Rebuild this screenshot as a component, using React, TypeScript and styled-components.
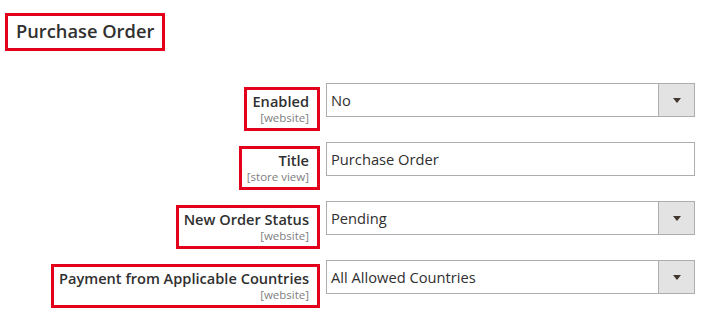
import React from 'react';
import styled, { createGlobalStyle } from 'styled-components';

const GlobalStyle = createGlobalStyle`
  html, body {
    margin: 0;
    padding: 0;
    background: #ffffff;
  }
  body {
    font-family: 'Open Sans', 'Noto Sans', sans-serif;
    color: #303030;
  }
`;

interface FieldConfig {
  label: string;
  scope: string;
  value: string;
  select: boolean;
}

const fields: FieldConfig[] = [
  { label: 'Enabled', scope: '[website]', value: 'No', select: true },
  { label: 'Title', scope: '[store view]', value: 'Purchase Order', select: false },
  { label: 'New Order Status', scope: '[website]', value: 'Pending', select: true },
  { label: 'Payment from Applicable Countries', scope: '[website]', value: 'All Allowed Countries', select: true },
];

function App(): JSX.Element {
  return (
    <>
      <GlobalStyle />
      <Page>
        <Heading>
          <HeadingText>Purchase Order</HeadingText>
        </Heading>
        <Form>
          {fields.map((f) => (
            <Row key={f.label}>
              <LabelCell>
                <Highlight>
                  <LabelText>{f.label}</LabelText>
                  <Scope>{f.scope}</Scope>
                </Highlight>
              </LabelCell>
              <Control>
                <Value>{f.value}</Value>
                {f.select ? (
                  <ArrowButton>
                    <Caret />
                  </ArrowButton>
                ) : null}
              </Control>
            </Row>
          ))}
        </Form>
      </Page>
    </>
  );
}

const Page = styled.div`
  width: 721px;
  height: 332px;
  padding: 13px 0 0 5px;
  box-sizing: border-box;
  overflow: hidden;
`;

const Heading = styled.div`
  display: inline-block;
  border: 3px solid #e2001a;
  padding: 3px 8px 5px 8px;
`;

const HeadingText = styled.h2`
  margin: 0;
  font-size: 18.3px;
  line-height: 24px;
  font-weight: 600;
  color: #303030;
`;

const Form = styled.div`
  margin-top: 32px;
  margin-left: -5px;
  display: flex;
  flex-direction: column;
  gap: 11px;
`;

const Row = styled.div`
  display: grid;
  grid-template-columns: 320px 369px;
  column-gap: 6px;
  align-items: start;
`;

const LabelCell = styled.div`
  display: flex;
  justify-content: flex-end;
  padding-top: 4px;
`;

const Highlight = styled.div`
  border: 3px solid #e2001a;
  padding: 1px 8px 3px 5px;
  display: flex;
  flex-direction: column;
  align-items: flex-end;
`;

const LabelText = styled.span`
  font-size: 14.6px;
  line-height: 20px;
  font-weight: 600;
  color: #303030;
  white-space: nowrap;
`;

const Scope = styled.span`
  font-size: 11.5px;
  line-height: 14px;
  color: #808080;
  white-space: nowrap;
`;

const Control = styled.div`
  height: 34px;
  box-sizing: border-box;
  border: 1px solid #adadad;
  display: flex;
  align-items: center;
  background: #ffffff;
`;

const Value = styled.span`
  flex: 1;
  padding-left: 4px;
  font-size: 14.7px;
  line-height: 20px;
  color: #303030;
  white-space: nowrap;
`;

const ArrowButton = styled.div`
  width: 35px;
  height: 100%;
  border-left: 1px solid #adadad;
  background: #e3e3e3;
  display: flex;
  align-items: center;
  justify-content: center;
`;

const Caret = styled.span`
  width: 0;
  height: 0;
  border-left: 4px solid transparent;
  border-right: 4px solid transparent;
  border-top: 5px solid #41362f;
`;

export default App;
